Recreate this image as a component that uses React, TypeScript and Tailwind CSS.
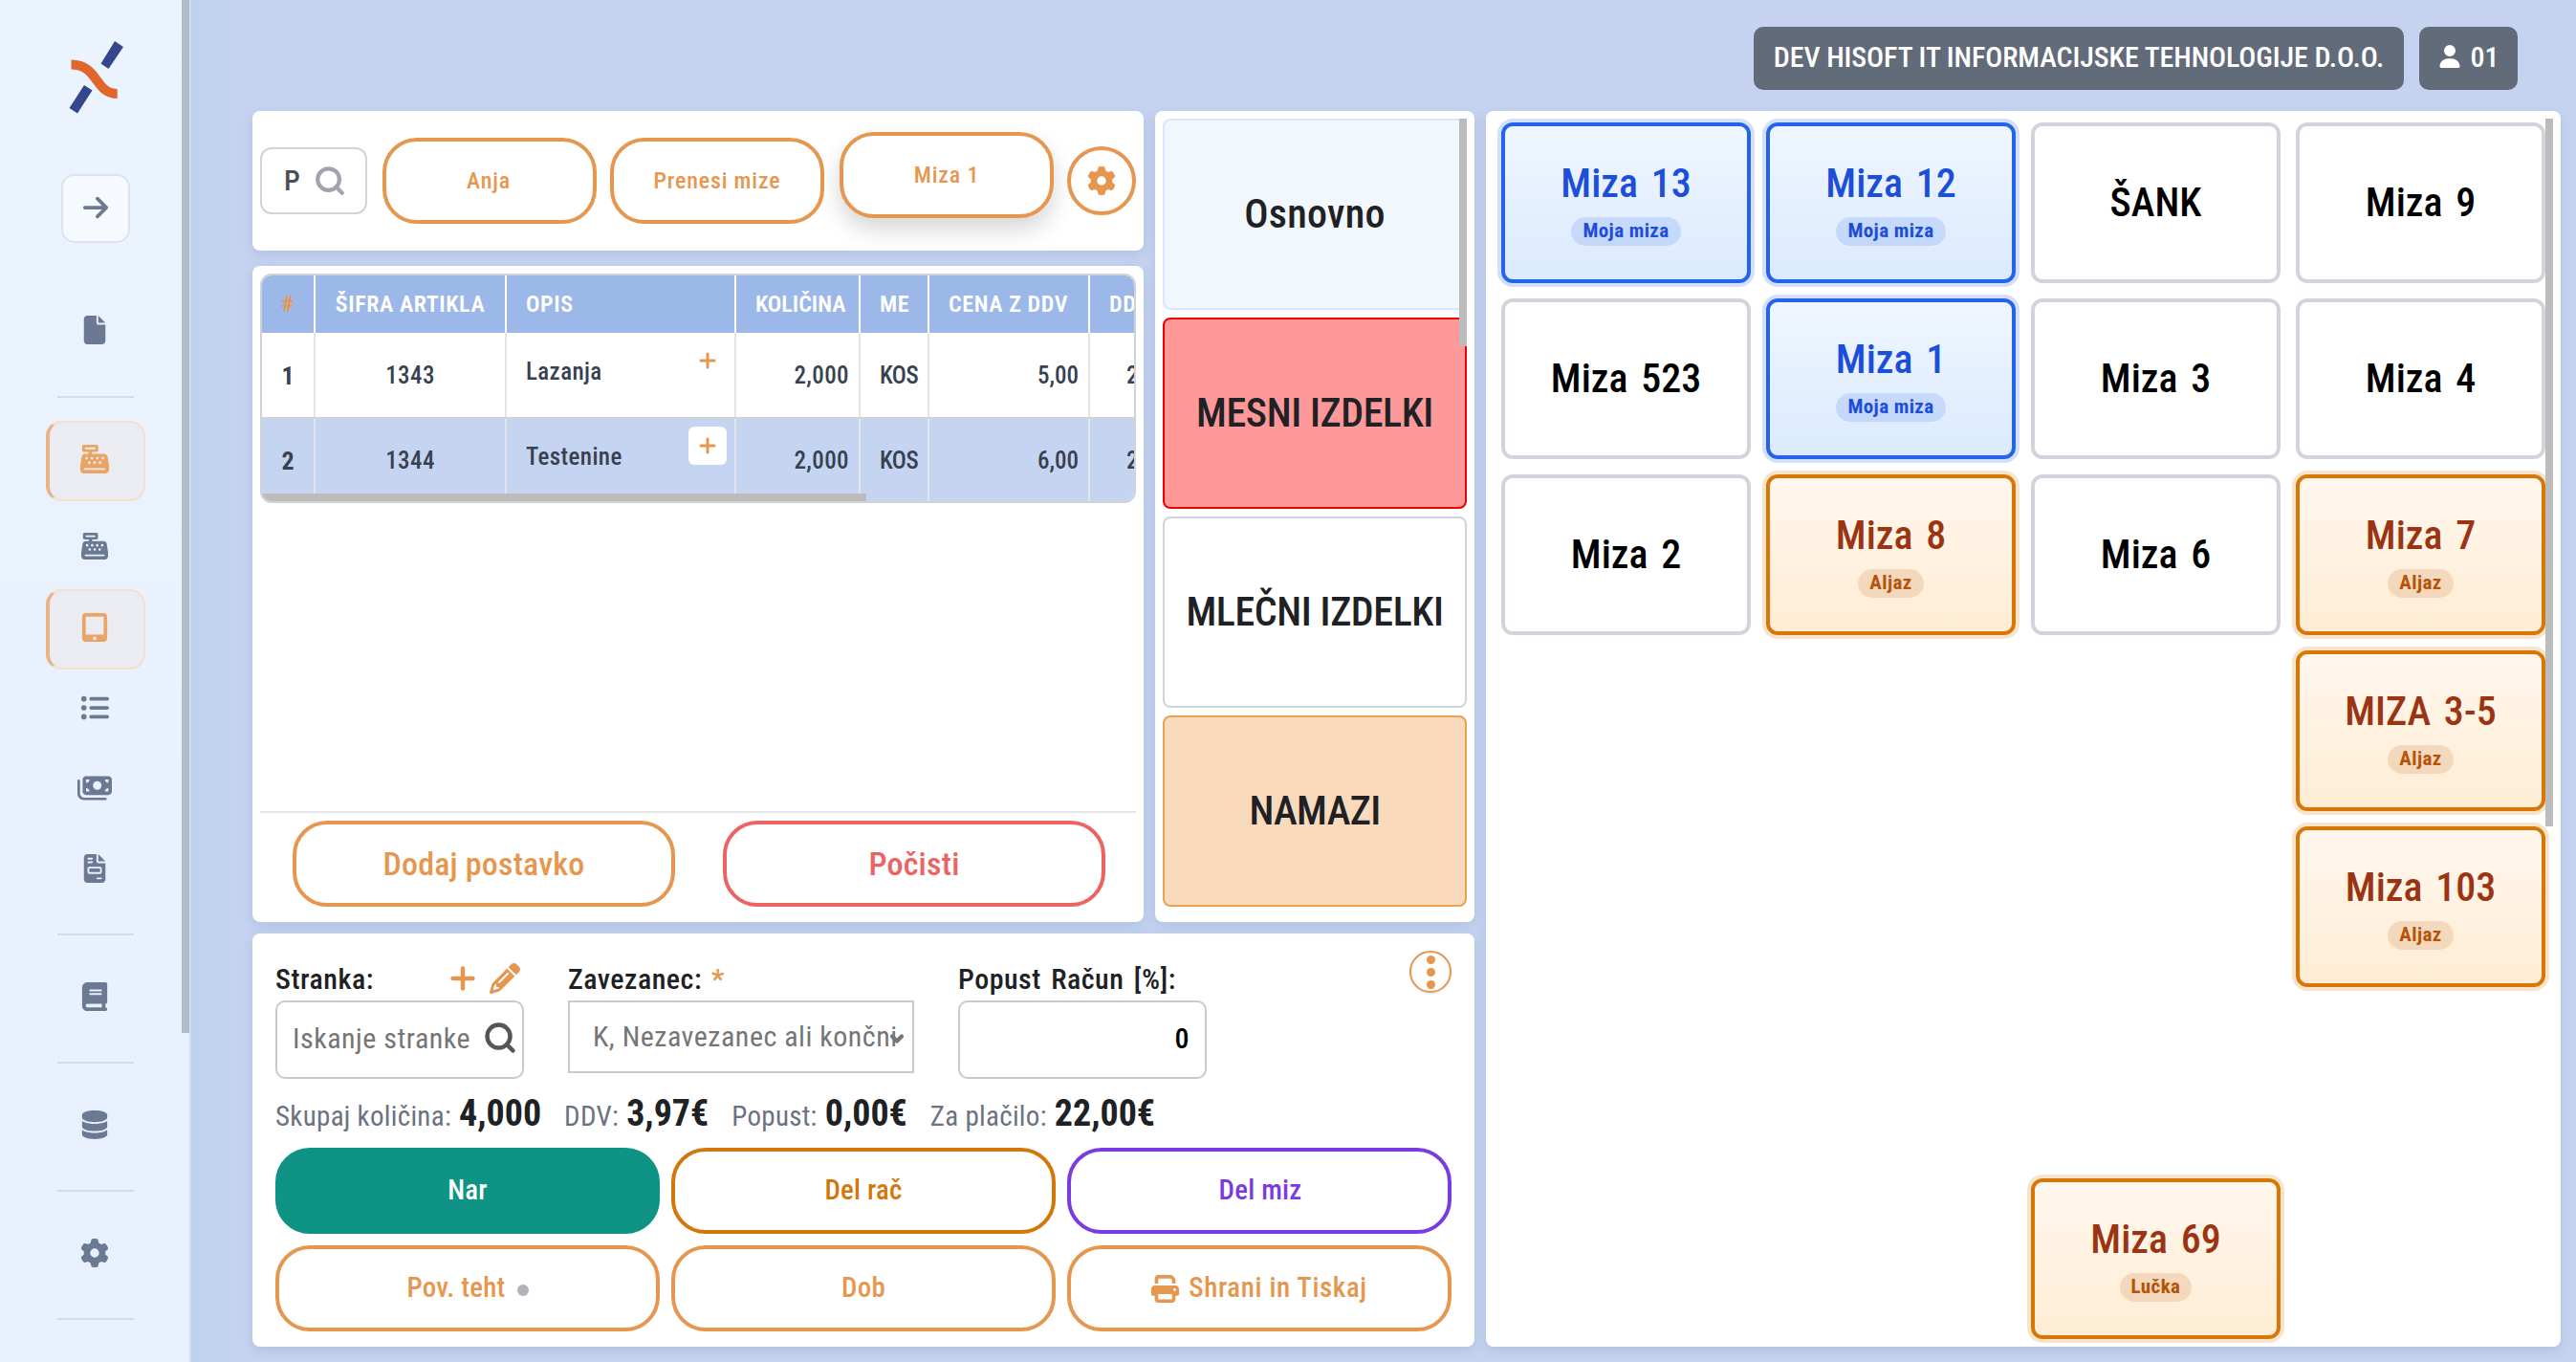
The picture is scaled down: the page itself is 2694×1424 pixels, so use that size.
import { ReactNode } from "react";
import clsx from "clsx";
import { ChevronDown, Plus, Search } from "lucide-react";
import {
  FaArrowRight,
  FaBook,
  FaCashRegister,
  FaDatabase,
  FaFile,
  FaFileInvoice,
  FaGear,
  FaListUl,
  FaMoneyBills,
  FaPencil,
  FaPrint,
  FaTabletScreenButton,
  FaUser,
} from "react-icons/fa6";

type TableOwner = "mine" | "other" | "free";

type RestaurantTable = {
  name: string;
  owner: TableOwner;
  badge?: string;
  place: string;
};

type OrderLine = {
  no: number;
  code: string;
  name: string;
  quantity: string;
  unit: string;
  price: string;
  vat: string;
  selected: boolean;
};

const tables: RestaurantTable[] = [
  { name: "Miza 13", owner: "mine", badge: "Moja miza", place: "col-start-1 row-start-1" },
  { name: "Miza 12", owner: "mine", badge: "Moja miza", place: "col-start-2 row-start-1" },
  { name: "ŠANK", owner: "free", place: "col-start-3 row-start-1" },
  { name: "Miza 9", owner: "free", place: "col-start-4 row-start-1" },
  { name: "Miza 523", owner: "free", place: "col-start-1 row-start-2" },
  { name: "Miza 1", owner: "mine", badge: "Moja miza", place: "col-start-2 row-start-2" },
  { name: "Miza 3", owner: "free", place: "col-start-3 row-start-2" },
  { name: "Miza 4", owner: "free", place: "col-start-4 row-start-2" },
  { name: "Miza 2", owner: "free", place: "col-start-1 row-start-3" },
  { name: "Miza 8", owner: "other", badge: "Aljaz", place: "col-start-2 row-start-3" },
  { name: "Miza 6", owner: "free", place: "col-start-3 row-start-3" },
  { name: "Miza 7", owner: "other", badge: "Aljaz", place: "col-start-4 row-start-3" },
  { name: "MIZA 3-5", owner: "other", badge: "Aljaz", place: "col-start-4 row-start-4" },
  { name: "Miza 103", owner: "other", badge: "Aljaz", place: "col-start-4 row-start-5" },
  { name: "Miza 69", owner: "other", badge: "Lučka", place: "col-start-3 row-start-7" },
];

const lines: OrderLine[] = [
  { no: 1, code: "1343", name: "Lazanja", quantity: "2,000", unit: "KOS", price: "5,00", vat: "22,00", selected: false },
  { no: 2, code: "1344", name: "Testenine", quantity: "2,000", unit: "KOS", price: "6,00", vat: "22,00", selected: true },
];

const categories = [
  { name: "Osnovno", style: "border-[#dbe6fa] bg-[#f2f7fe] tracking-[0.3px]" },
  { name: "MESNI IZDELKI", style: "border-[#f00000] bg-[#ff9999] tracking-[-0.4px]" },
  { name: "MLEČNI IZDELKI", style: "border-[#d1d5db] bg-white tracking-[-0.4px]" },
  { name: "NAMAZI", style: "border-[#e9a252] bg-[#f9dabc] tracking-[-0.6px]" },
];

const totals = [
  { label: "Skupaj količina:", value: "4,000" },
  { label: "DDV:", value: "3,97€" },
  { label: "Popust:", value: "0,00€" },
  { label: "Za plačilo:", value: "22,00€" },
];

const ownerStyles: Record<TableOwner, string> = {
  mine: "border-[#2563eb] bg-linear-to-b from-[#eff6ff] to-[#dbeafe] text-[#1d4ed8] ring-4 ring-[#2563eb]/20",
  other: "border-[#d97706] bg-linear-to-b from-[#fff7ed] to-[#ffedd5] text-[#9a3412] ring-4 ring-[#d97706]/20",
  free: "border-[#d1d5db] bg-white text-black",
};

const badgeStyles: Record<TableOwner, string> = {
  mine: "bg-[#2563eb]/15 text-[#1d4ed8]",
  other: "bg-[#b45309]/15 text-[#b45309]",
  free: "",
};

const lineGrid = "grid w-[990px] shrink-0 grid-cols-[56px_200px_240px_130px_72px_168px_124px]";

function Logo() {
  return (
    <svg viewBox="0 0 56 76" className="h-19 w-14 overflow-visible">
      <path d="M47 0l9 6-15.500 23-8-5.500z" fill="#35478c" />
      <path d="M15 46l8.500 5.500L8 75.500 -.5 70z" fill="#35478c" />
      <path d="M1.500 24.500C30 24.500 26 55 49.700 55" fill="none" stroke="#e0662c" strokeWidth="10" />
    </svg>
  );
}

function NavItem({ children, active = false }: { children: ReactNode; active?: boolean }) {
  return (
    <button
      type="button"
      className={clsx(
        "flex h-[84px] w-[104px] shrink-0 items-center justify-center rounded-[16px] pb-1 text-[30px]",
        active ? "border-2 border-l-4 border-[#f3dfcd] border-l-[#ebb384] bg-[#ebecf1] pr-1 text-[#eaa465]" : "pr-0.5 text-[#6b7a92]",
      )}
    >
      {children}
    </button>
  );
}

function NavDivider() {
  return <div className="h-0.5 w-20 shrink-0 bg-[#d5dce8]" />;
}

function Sidebar() {
  return (
    <aside className="relative flex w-[200px] shrink-0 flex-col items-center overflow-hidden border-r-2 border-[#d0ddf0] bg-linear-to-b from-[#ebf3ff] to-[#e7f0fc] pl-0.5">
      <div className="mt-[43px] pl-0.5">
        <Logo />
      </div>
      <button type="button" className="mt-[63px] flex h-[72px] w-[72px] shrink-0 items-center justify-center rounded-[14px] border-2 border-[#dbe3f0] bg-[#f6faff] pb-0.5 text-[30px] text-[#6b7a8e]">
        <FaArrowRight />
      </button>
      <div className="mt-[51px]">
        <NavItem><FaFile /></NavItem>
      </div>
      <div className="mt-[25px]"><NavDivider /></div>
      <div className="mt-6 flex flex-col gap-1">
        <NavItem active><FaCashRegister /></NavItem>
        <NavItem><FaCashRegister className="mt-1.5 text-[28px]" /></NavItem>
        <NavItem active><FaTabletScreenButton /></NavItem>
      </div>
      <div className="flex flex-col">
        <NavItem><FaListUl /></NavItem>
        <NavItem><FaMoneyBills className="size-[36px]" /></NavItem>
        <NavItem><FaFileInvoice /></NavItem>
      </div>
      <div className="mt-6 flex flex-col items-center gap-6">
        <NavDivider />
        <NavItem><FaBook /></NavItem>
        <NavDivider />
        <NavItem><FaDatabase /></NavItem>
        <NavDivider />
        <NavItem><FaGear /></NavItem>
        <NavDivider />
      </div>
      <div className="absolute right-0 top-0 h-[1080px] w-2 bg-[#afbccb]" />
    </aside>
  );
}

function Panel({ children, className }: { children: ReactNode; className?: string }) {
  return <section className={clsx("rounded-[8px] bg-white shadow-[0_4px_12px_rgba(100,130,170,0.22)]", className)}>{children}</section>;
}

function OutlineButton({ children, className }: { children: ReactNode; className?: string }) {
  return (
    <button type="button" className={clsx("flex h-[90px] items-center justify-center rounded-[36px] border-4", className)}>
      {children}
    </button>
  );
}

function Toolbar() {
  return (
    <Panel className="flex h-[146px] items-center px-2">
      <div className="flex h-[70px] w-28 items-center justify-between rounded-[12px] border-2 border-[#d1d5d8] pl-[23px] pr-[20px] text-[30px] text-[#4b5058]">
        <span className="pb-0.5">P</span>
        <Search className="size-[34px] text-[#a0a4ae]" strokeWidth={3} />
      </div>
      <OutlineButton className="ml-4 w-56 border-[#e6974f] pr-0.5 text-2xl tracking-[0.8px] text-[#e6974f]">Anja</OutlineButton>
      <OutlineButton className="ml-3.5 w-56 border-[#e6974f] text-2xl tracking-[0.8px] text-[#e6974f]">Prenesi mize</OutlineButton>
      <OutlineButton className="mb-3 ml-4 w-56 border-[#e6974f] bg-white text-2xl tracking-[0.8px] text-[#e6974f] shadow-[0_12px_24px_rgba(0,0,0,0.16)]">Miza 1</OutlineButton>
      <button type="button" className="ml-3.5 flex size-[72px] items-center justify-center rounded-full border-4 border-[#e6974f] text-[30px] text-[#e6974f]">
        <FaGear />
      </button>
    </Panel>
  );
}

function OrderTable() {
  return (
    <div className="relative h-[240px] overflow-hidden rounded-[12px] border-2 border-[#d0d3d6] text-[#374151]">
      <div className={clsx(lineGrid, "h-[60px] divide-x-2 divide-white bg-[#9cb8e8] text-2xl font-semibold tracking-[0.6px] text-white *:flex *:items-center")}>
        <div className="justify-center text-[#e6974f]">#</div>
        <div className="justify-center">ŠIFRA ARTIKLA</div>
        <div className="pl-5">OPIS</div>
        <div className="whitespace-nowrap pl-5 tracking-normal">KOLIČINA</div>
        <div className="pl-5">ME</div>
        <div className="pl-5">CENA Z DDV</div>
        <div className="pl-5">DDV</div>
      </div>
      {lines.map((line) => (
        <div
          key={line.no}
          className={clsx(
            lineGrid,
            "divide-x-2 divide-[#e1e4ea] border-[#d0d3d6] text-[25px] *:flex *:items-center",
            line.selected ? "h-[86px] bg-[#c5d4f0]" : "h-[90px] border-b-2 bg-white",
          )}
        >
          <div className="justify-center pt-0.5 text-[26px] font-bold">{line.no}</div>
          <div className="justify-center pt-0.5 tracking-[0.4px]">{line.code}</div>
          <div className="justify-between pb-1.5 pl-5 pr-2 tracking-[0.4px]">
            {line.name}
            <span className={clsx("mb-6 flex size-10 items-center justify-center rounded-[6px] text-[#e6974f]", line.selected && "bg-white")}>
              <Plus className="size-6" strokeWidth={3} />
            </span>
          </div>
          <div className="justify-end pr-2.5 pt-0.5 tracking-[0.4px]">{line.quantity}</div>
          <div className="pl-5 pt-0.5 tracking-[-0.5px]">{line.unit}</div>
          <div className="justify-end pr-2.5 pt-0.5">{line.price}</div>
          <div className="pl-[38px] pt-0.5">{line.vat}</div>
        </div>
      ))}
      <div className="absolute bottom-0 left-0 h-2 w-[632px] bg-[#bcbcbc]" />
    </div>
  );
}

function OrderPanel() {
  return (
    <Panel className="flex h-[686px] flex-col px-2 pt-2">
      <OrderTable />
      <div className="mt-auto border-t-2 border-[#e3e4e6] pb-4 pt-2">
        <div className="flex justify-center gap-[50px] pl-0.5 text-[34px] tracking-[0.2px]">
          <OutlineButton className="w-[400px] border-[#e6974f] text-[#e6974f]">Dodaj postavko</OutlineButton>
          <OutlineButton className="w-[400px] border-[#ec6363] text-[#ec6363]">Počisti</OutlineButton>
        </div>
      </div>
    </Panel>
  );
}

function CategoryPanel() {
  return (
    <Panel className="relative flex w-[334px] flex-col gap-2 p-2">
      {categories.map((category) => (
        <button key={category.name} type="button" className={clsx("h-[200px] rounded-[8px] border-2 pb-0.5 text-[42px] text-[#202124]", category.style)}>
          {category.name}
        </button>
      ))}
      <div className="absolute right-2 top-2 h-[238px] w-2 bg-[#bcbcbc]" />
    </Panel>
  );
}

function CheckoutPanel() {
  return (
    <Panel className="h-[432px] px-6 pt-[18px]">
      <div className="flex h-[134px] text-[30px] tracking-[0.5px] text-[#202124]">
        <div className="w-[260px]">
          <div className="flex h-[52px] items-center pt-1.5">
            Stranka:
            <Plus className="ml-auto size-9 text-[#e6974f]" strokeWidth={3} />
            <FaPencil className="ml-2.5 mr-1 size-8 text-[#e6974f]" />
          </div>
          <div className="flex h-[82px] items-center justify-between rounded-[10px] border-2 border-[#c8caca] pb-1 pl-4 pr-[5px] font-normal text-[#757575]">
            Iskanje stranke
            <Search className="size-9 text-[#555]" strokeWidth={3} />
          </div>
        </div>
        <div className="ml-[46px] w-[362px]">
          <div className="flex h-[52px] items-center pt-1.5">
            Zavezanec: <span className="ml-2.5 text-[#e6974f]">*</span>
          </div>
          <div className="relative flex h-[76px] items-center border-2 border-[#c8caca] pb-0.5 pl-6 pr-3 font-normal text-[#757575]">
            <span className="overflow-hidden whitespace-nowrap">K, Nezavezanec ali končni</span>
            <ChevronDown className="absolute right-1.5 top-7 size-5" strokeWidth={5} />
          </div>
        </div>
        <div className="ml-[46px] w-[260px]">
          <div className="flex h-[52px] items-center pt-1.5 [word-spacing:3px]">Popust Račun [%]:</div>
          <div className="flex h-[82px] items-center justify-end rounded-[10px] border-2 border-[#c8caca] pb-1 pr-4 text-black">0</div>
        </div>
        <button type="button" className="ml-auto flex size-11 flex-col items-center justify-center gap-1 rounded-full border-2 border-[#e6974f] shadow-sm">
          <i className="size-[9px] rounded-full bg-[#e6974f]" />
          <i className="size-[9px] rounded-full bg-[#e6974f]" />
          <i className="size-[9px] rounded-full bg-[#e6974f]" />
        </button>
      </div>
      <div className="flex h-[72px] items-center gap-6">
        {totals.map((total) => (
          <div key={total.label} className="flex items-baseline gap-2">
            <span className="text-[29px] font-normal tracking-[0.3px] text-[#6b7280]">{total.label}</span>
            <span className="text-[38px] font-bold">{total.value}</span>
          </div>
        ))}
      </div>
      <div className="grid grid-cols-3 gap-3 text-[29px] tracking-[0.2px]">
        <OutlineButton className="border-[#0e9384] bg-[#0e9384] text-white">Nar</OutlineButton>
        <OutlineButton className="border-[#d2770c] text-[#d2770c]">Del rač</OutlineButton>
        <OutlineButton className="border-[#7a3be0] pl-0.5 text-[#7a3be0]">Del miz</OutlineButton>
        <OutlineButton className="gap-3 border-[#e6974f] text-[#e6974f]">
          Pov. teht
          <i className="mt-1 size-3 rounded-full bg-[#b0b3b8]" />
        </OutlineButton>
        <OutlineButton className="border-[#e6974f] text-[#e6974f]">Dob</OutlineButton>
        <OutlineButton className="gap-2.5 border-[#e6974f] text-[#e6974f]">
          <FaPrint />
          <span className="tracking-[0.6px]">Shrani in Tiskaj</span>
        </OutlineButton>
      </div>
    </Panel>
  );
}

function TablesPanel() {
  return (
    <Panel className="relative h-[1292px] w-[1124px] pl-4 pr-4 pt-3">
      <div className="grid grid-cols-4 grid-rows-[repeat(7,168px)] gap-4">
        {tables.map((table) => (
          <button
            key={table.name}
            type="button"
            className={clsx("flex flex-col items-center justify-center rounded-[12px] border-4 text-[42px] leading-[58px] [word-spacing:4px]", table.place, ownerStyles[table.owner])}
          >
            {table.name}
            {table.badge && (
              <span className={clsx("mb-1 mt-1.5 h-[30px] rounded-full px-3 text-[21px] font-bold leading-[28px] tracking-[0.4px] [word-spacing:0px]", badgeStyles[table.owner])}>{table.badge}</span>
            )}
          </button>
        ))}
      </div>
      <div className="absolute right-2 top-2 h-[740px] w-2 bg-[#bcbcbc]" />
    </Panel>
  );
}

export default function App() {
  return (
    <div className="flex h-[1424px] w-[2694px] overflow-hidden bg-[#c5d3f0] font-['Roboto_Condensed',Roboto,sans-serif] font-medium text-[#202124]">
      <Sidebar />
      <main className="flex-1 bg-linear-to-r from-[#bdd2ee] to-[#c5d3f0] to-[60px] pl-16 pr-4">
        <header className="flex h-[116px] justify-end gap-4 pr-[45px] pt-7 text-[30px] text-white">
          <div className="flex h-[66px] w-[680px] items-center justify-center rounded-[10px] bg-[#626b79] pb-1 tracking-[-0.1px]">
            DEV HISOFT IT INFORMACIJSKE TEHNOLOGIJE D.O.O.
          </div>
          <div className="flex h-[66px] w-[103px] items-center justify-center gap-2.5 rounded-[10px] bg-[#626b79] pb-1">
            <FaUser className="size-6" />
            01
          </div>
        </header>
        <div className="flex gap-3">
          <div className="flex w-[1278px] flex-col gap-3">
            <div className="flex gap-3">
              <div className="flex w-[932px] flex-col gap-4">
                <Toolbar />
                <OrderPanel />
              </div>
              <CategoryPanel />
            </div>
            <CheckoutPanel />
          </div>
          <TablesPanel />
        </div>
      </main>
    </div>
  );
}
